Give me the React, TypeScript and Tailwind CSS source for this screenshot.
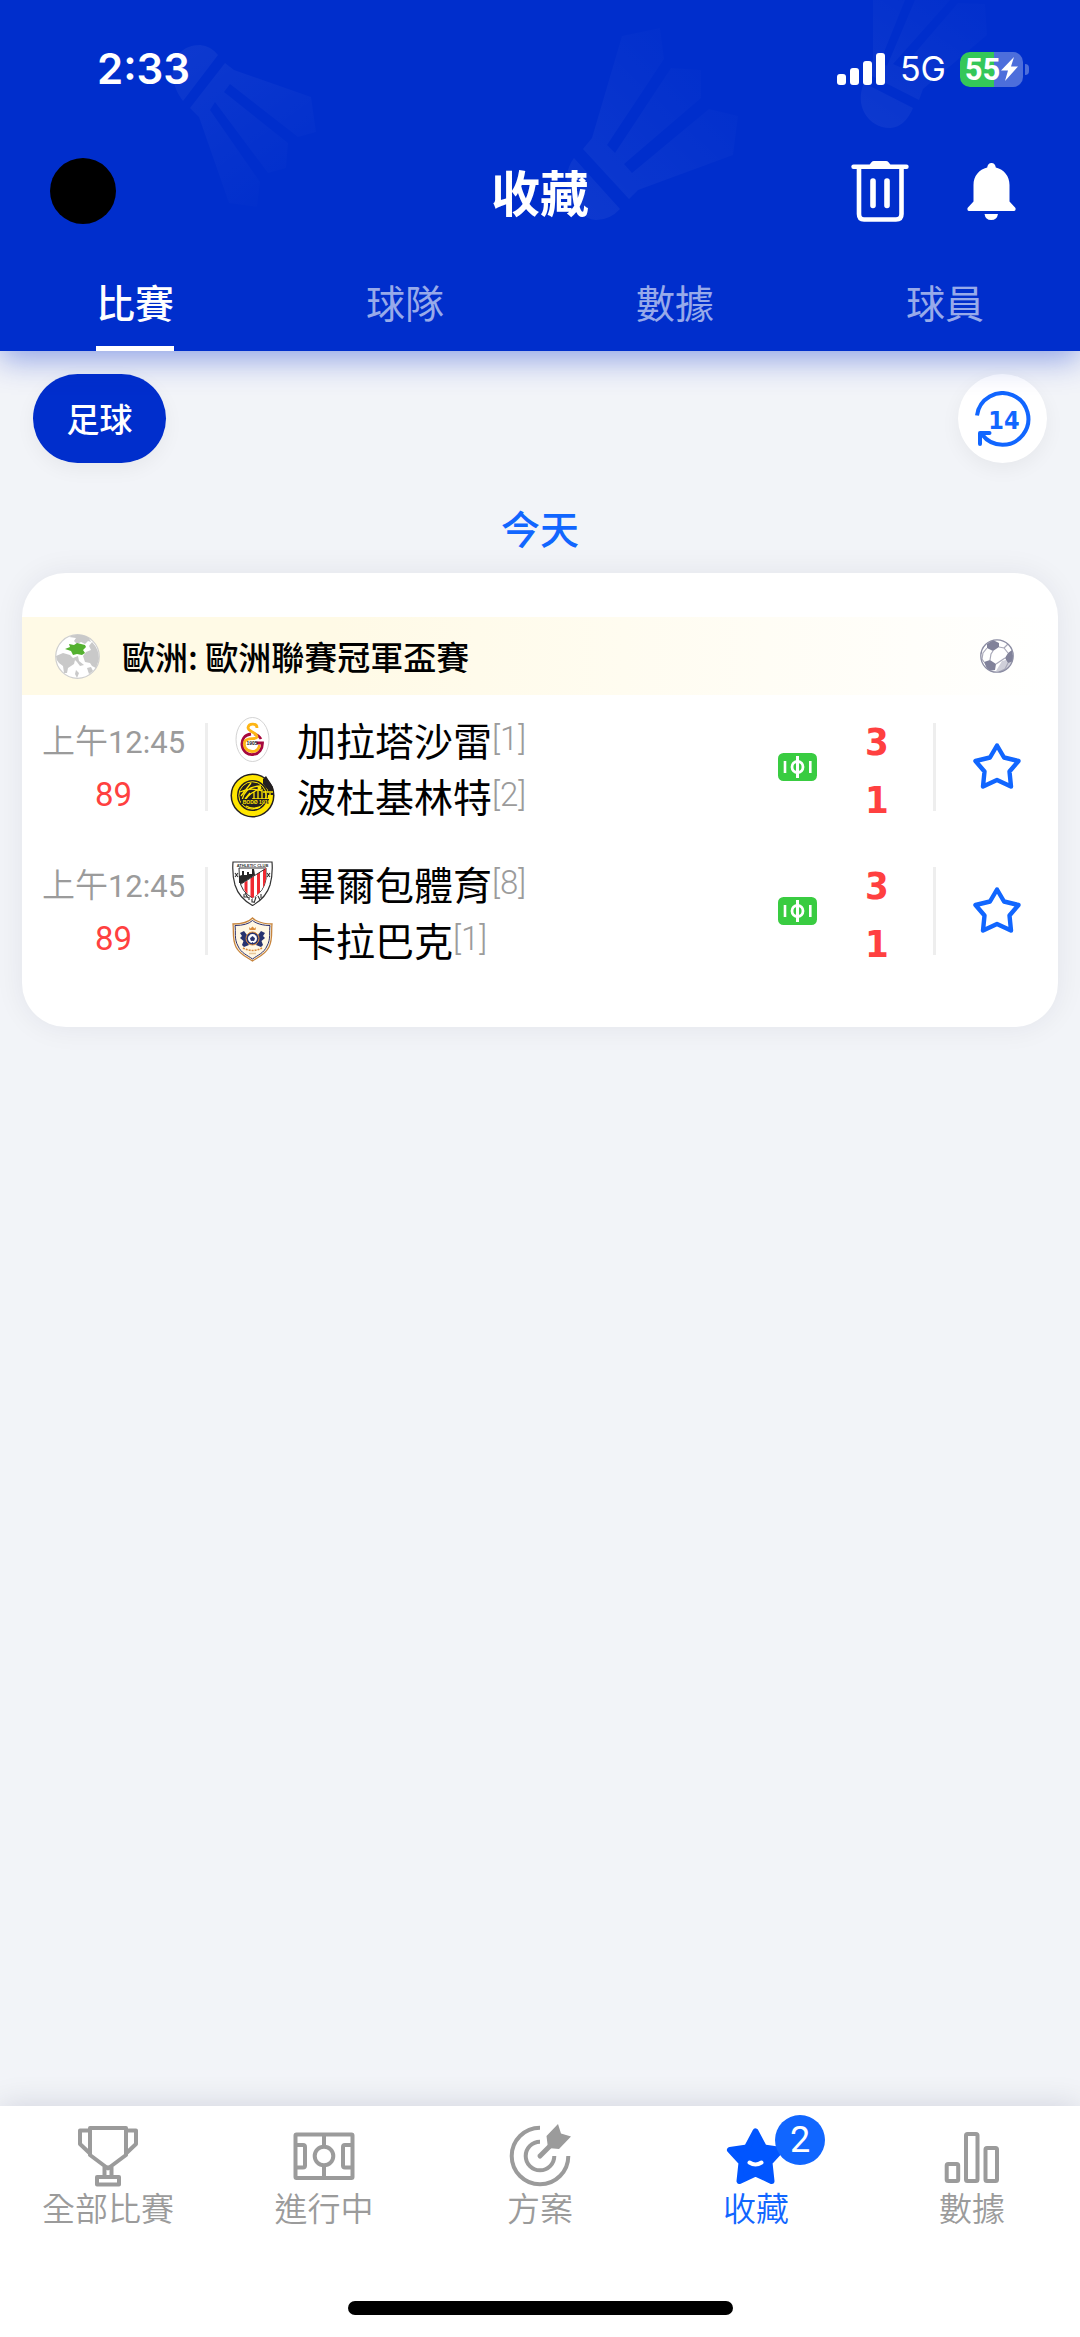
import type { ReactNode } from "react";

const CJK = "font-['Noto_Sans_CJK_TC','Noto_Sans',sans-serif]";

function Shuttlecocks() {
  return (
    <svg aria-hidden="true" viewBox="0 0 1080 230" preserveAspectRatio="xMidYMin slice" className="pointer-events-none absolute inset-x-0 top-0 w-full">
      <defs>
        <linearGradient id="s1" gradientUnits="userSpaceOnUse" x1="185" y1="60" x2="285" y2="200">
          <stop offset="0" stopColor="#fff" stopOpacity=".05" />
          <stop offset="1" stopColor="#fff" stopOpacity=".004" />
        </linearGradient>
        <linearGradient id="s2" gradientUnits="userSpaceOnUse" x1="580" y1="200" x2="715" y2="60">
          <stop offset="0" stopColor="#fff" stopOpacity=".05" />
          <stop offset="1" stopColor="#fff" stopOpacity=".006" />
        </linearGradient>
        <linearGradient id="s3" gradientUnits="userSpaceOnUse" x1="880" y1="125" x2="960" y2="0">
          <stop offset="0" stopColor="#fff" stopOpacity=".05" />
          <stop offset="1" stopColor="#fff" stopOpacity=".01" />
        </linearGradient>
      </defs>
      <path fill="url(#s1)" d="M183 101C164 76 172 45 200 45Q211 46 218 55ZM225 63 234 70 311 97 316 132 298 137 230 84 224 92 288 143 286 168 268 173 215 102 210 110 260 182 257 207 229 203 199 117 190 108Z" />
      <path fill="url(#s2)" d="M574 158C558 178 570 218 596 220Q610 220 620 209ZM583 149 592 138 622 36 660 28 664 59 607 145 615 153 671 68 701 70 701 98 624 164 632 173 709 109 738 116 733 155 638 190 629 199Z" />
      <path fill="url(#s3)" d="M864 83C854 105 868 128 890 128Q905 127 913 108ZM868 74 919 100 923 89 987 35 985 4 958 3 902 68 893 64 950 0 915 0 887 66 880 62 905 0 873 0 873 60Z" />
    </svg>
  );
}

function StatusBar() {
  return (
    <div className="relative flex h-[138px] items-center justify-between pr-[51px] pl-[97px] font-['Inter',sans-serif] text-white">
      <span className="text-[42px] leading-[50px] font-semibold">2:33</span>
      <div className="flex items-center">
        <svg width="48" height="32" viewBox="0 0 48 32" fill="#fff" aria-label="signal">
          <rect x="0" y="21" width="9" height="11" rx="3" />
          <rect x="13" y="15" width="9" height="17" rx="3" />
          <rect x="26" y="8" width="9" height="24" rx="3" />
          <rect x="39" y="0" width="9" height="32" rx="3" />
        </svg>
        <span className="ml-[15px] text-[34px] leading-[40px]">5G</span>
        <div className="ml-[14px] flex h-[35px] w-[63px] items-center justify-center gap-px rounded-[10px] bg-[linear-gradient(90deg,#34c759_0_54%,#4d6edb_54%)]">
          <span className="font-['Roboto',sans-serif] text-[31px] leading-[35px] font-bold">55</span>
          <svg width="17" height="24" viewBox="0 0 17 24" fill="#fff" aria-hidden="true">
            <path d="M13 0 0 13.500h7L4 24 17 9.500H10Z" />
          </svg>
        </div>
        <span className="ml-[2px] h-[11px] w-[4px] rounded-r-full bg-[#4d6edb]" />
      </div>
    </div>
  );
}

function TrashIcon() {
  return (
    <svg width="58" height="61" viewBox="0 0 58 61" fill="none" stroke="#fff" strokeLinecap="round" aria-hidden="true">
      <path d="M2.500 5.700H55.500" strokeWidth="4.400" />
      <path d="M18 5.500Q20 0 23 0H35Q38 0 40 5.500Z" fill="#fff" stroke="none" />
      <path d="M8 7V53Q8 58.500 13 58.500H45Q50.500 58.500 50.500 53V7" strokeWidth="4.600" />
      <path d="M22 20V44.500M36 20V44.500" strokeWidth="5.600" />
    </svg>
  );
}

function BellIcon() {
  return (
    <svg width="49" height="57" viewBox="0 0 49 57" fill="#fff" aria-hidden="true">
      <path d="M24.500 0C27 0 28.500 2 28.800 4.500 37 6.500 42.500 13 42.500 22V38.500L48.500 45Q49 48 47 48H2Q0 48 .5 45L6.500 38.500V22C6.500 13 12 6.500 20.200 4.500 20.500 2 22 0 24.500 0Z" />
      <path d="M17.500 51H31Q30 57 24.200 57T17.500 51Z" />
    </svg>
  );
}

const TABS = ["比賽", "球隊", "數據", "球員"];

function Header() {
  return (
    <header className="relative z-10 bg-[#002ecc] shadow-[0_8px_30px_rgba(0,46,204,0.42)]">
      <Shuttlecocks />
      <StatusBar />
      <div className="relative grid h-[106px] grid-cols-[1fr_auto_1fr] items-center px-[50px]">
        <button aria-label="帳戶" className="size-[66px] rounded-full bg-black" />
        <h1 className="text-[49px] leading-[60px] font-bold text-white">收藏</h1>
        <div className="flex items-center justify-end gap-[58px] pr-[14px]">
          <button aria-label="刪除"><TrashIcon /></button>
          <button aria-label="通知"><BellIcon /></button>
        </div>
      </div>
      <nav className="relative grid h-[107px] grid-cols-4">
        {TABS.map((t, i) => (
          <button key={t} className="flex flex-col items-center justify-end">
            <span className={i === 0 ? "text-[39px] leading-[58px] font-medium text-white" : "text-[39px] leading-[58px] text-white/60"}>{t}</span>
            <span className={i === 0 ? "mt-[16px] h-[5px] w-[78px] bg-white" : "mt-[16px] h-[5px] w-[78px]"} />
          </button>
        ))}
      </nav>
    </header>
  );
}

function HistoryIcon() {
  return (
    <svg width="56" height="56" viewBox="0 0 56 56" fill="none" stroke="#1166ff" strokeWidth="4" aria-hidden="true">
      <path d="M2 24.500A25.800 25.800 0 1 1 7 43.500" />
      <path d="M5 53V42H14.500" strokeLinecap="round" strokeLinejoin="round" />
      <text x="29" y="38" textAnchor="middle" fill="#1166ff" stroke="none" className="font-['DejaVu_Sans_Condensed','DejaVu_Sans',sans-serif] text-[25px] font-bold">14</text>
    </svg>
  );
}

function Globe() {
  return (
    <svg width="45" height="45" viewBox="0 0 45 45" aria-hidden="true">
      <circle cx="22.500" cy="22.500" r="21.800" fill="#fff" stroke="#cfcfcf" strokeWidth="1.200" />
      <path fill="#c9c9c9" d="M14 3C20 0 29 0 34 4L36 8 33 7 30 10 26 8 22 10 19 7 21 4ZM37 8Q44 15 44 25L41 34 37 32 35 29 30 28 28 22 31 18 36 16 34 12ZM1 22 8 19 15 21 20 26 19 30 13 34 12 39 9 39 8 32 4 29Q1 26 1 22ZM18 24 23 22 24 27 29 31 25 32 22 28ZM21 36 24 39 22 44 20 40ZM32 34 36 33 38 37 34 40Z" />
      <path fill="#54b130" d="M10 15 15 13 14 10 19 11 22 9 26 10 30 11 31 13 28 16 30 19 27 21 22 20 18 21 16 17Z" />
    </svg>
  );
}

function SoccerBall() {
  return (
    <svg width="34" height="34" viewBox="0 0 34 34" aria-hidden="true">
      <defs><clipPath id="ball"><circle cx="17" cy="17" r="16.200" /></clipPath></defs>
      <g clipPath="url(#ball)">
        <circle cx="17" cy="17" r="16.500" fill="#fff" />
        <path d="M22 22 30 20 33 26 24 33 16 32Z" fill="#cfcfd9" />
        <path d="M13 1 19 4 19 8 13 12 7 9 7 5ZM32 11 28 14 25 19 28 24 34 22ZM4 23 10 21 16 25 15 31 8 32ZM1 10 0 16 2 14ZM21 33 30 29 30 34Z" fill="#81829a" />
        <path d="M13 12 11 15 10 21M19 8 24 9 28 14M25 19 22 21 16 25M7 9 3 14 2 20 4 23M24 9 28 5M28 24 25 30 19 33" fill="none" stroke="#a9a9b9" strokeWidth="1.200" />
      </g>
      <circle cx="17" cy="17" r="16.200" fill="none" stroke="#8b8ca2" strokeWidth="1.300" />
    </svg>
  );
}

function Galatasaray() {
  return (
    <svg width="45" height="45" viewBox="0 0 45 45" aria-hidden="true">
      <ellipse cx="22.500" cy="22.500" rx="16.500" ry="22" fill="#fff" stroke="#c8c8c8" strokeWidth=".8" />
      <path d="M21 17C14 18 11.500 23 12 28 13 35 18 38 23 37.500 29 37 32.500 32 32.500 26H26.500" fill="none" stroke="#a6093d" strokeWidth="2.800" />
      <path d="M24 17Q29 18 31 22" fill="none" stroke="#a6093d" strokeWidth="2.600" />
      <path d="M27 11C27 6 19 6 18 10.500 18 15 27 15 27 20 26 23 18 20 15 24 13 29 16 34 22 34.500 27 34.500 29 31 29.500 28" fill="none" stroke="#fdb515" strokeWidth="2.800" />
      <text x="22" y="28" textAnchor="middle" fill="#222" className="font-['Liberation_Sans',sans-serif] text-[5px] font-bold">1905</text>
    </svg>
  );
}

function BodoGlimt() {
  return (
    <svg width="45" height="45" viewBox="0 0 45 45" aria-hidden="true">
      <circle cx="22.500" cy="22.500" r="22" fill="#231f20" />
      <circle cx="22.500" cy="22.500" r="18" fill="none" stroke="#ffe600" strokeWidth="5" />
      <path d="M33 6 36 3 43 14 44 22H36L38 17 33 11Z" fill="#231f20" />
      <circle cx="22.500" cy="22.500" r="13.700" fill="none" stroke="#ffe600" strokeWidth="1" />
      <path d="M12 27Q15 13 31 13M13 31Q18 20 30 16M11 23 21 10M10 19Q20 14 32 18M20 20 15 26M28 17V26M24 19V26M32 16V26M36 20V26M40 20V26M22 26H42M33 19H43" fill="none" stroke="#ffe600" strokeWidth="1.300" />
      <circle cx="29.500" cy="15" r="2" fill="#ffe600" />
      <path d="M16 33Q22 37 30 34" stroke="#ffe600" strokeWidth="1.500" fill="none" />
      <path d="M11 26H39V31H11Z" fill="#231f20" />
      <text x="26.500" y="30.500" textAnchor="middle" fill="#ffe600" className="font-['Liberation_Sans',sans-serif] text-[5px] font-bold">BODØ 1916</text>
    </svg>
  );
}

function Athletic() {
  return (
    <svg width="45" height="45" viewBox="0 0 45 45" aria-hidden="true">
      <defs><clipPath id="ath"><path d="M35.500 7V18Q34 30 23 37V27Q15 27 11 23Z" /></clipPath></defs>
      <path d="M3 1H42Q43 13 40 24 36 37 22.500 44.500 9 37 5 24 2 13 3 1Z" fill="#fff" stroke="#333" strokeWidth="1.200" />
      <path d="M9 7H36V18Q34 31 22.500 37 11 31 9.500 18Z" fill="#fff" stroke="#333" strokeWidth="1" />
      <path d="M9 15V22L14 22 25 14 24 8 22 8 22 13H19V11H17V14H14V10L12 10V14Z" fill="#262626" />
      <g clipPath="url(#ath)">
        <path d="M36 5 10 23 22 38 36 28Z" fill="#fff" />
      </g>
      <path d="M14.500 21.500 17.500 19.500V33Q15.500 31 14.500 29ZM20.500 17.500 24 15V36L22.500 37 20.500 35.500ZM27 13 30 11V31L27 34ZM33 9 36 7V18Q35.500 22 33 27Z" fill="#f02a32" />
      <path d="M35 8 11 23" stroke="#333" strokeWidth="1" />
      <text x="22.500" y="5.700" textAnchor="middle" fill="#333" className="font-['Liberation_Sans',sans-serif] text-[4px] font-bold">ATHLETIC CLUB</text>
      <path d="M5 12 8 16M8 12 5 16M37 12 40 16M40 12 37 16M14 33V36H17M19 36 19 39M22 38V41H24M28 35 30 39M31 33V37M15 32 18 37M26 36 24 42" stroke="#333" strokeWidth="1.100" fill="none" />
    </svg>
  );
}

function Qarabag() {
  return (
    <svg width="45" height="45" viewBox="0 0 45 45" aria-hidden="true">
      <path d="M22.500 1Q17 7 3 7C4 14 2 22 6 30 10 38 17 40 22.500 44 28 40 35 38 39 30 43 22 41 14 42 7 28 7 22.500 1 22.500 1Z" fill="#fff7e3" stroke="#c7853e" strokeWidth="1.300" />
      <path d="M22.500 3.500Q17 8.500 5 8.500C6 15 4 22 8 29 11 36 17 38 22.500 42 28 38 34 36 37 29 41 22 39 15 40 8.500 28 8.500 22.500 3.500 22.500 3.500Z" fill="none" stroke="#2b2f6c" strokeWidth="1" />
      <path d="M19 10 20.500 11.500 22.500 9.500 24.500 11.500 26 10 25.500 13H19.500Z" fill="#d98b3a" />
      <path d="M10 16 14 14 17 18 16 23 19 28 14 30 12 28 13.500 24 10 21 12 19ZM35 16 31 14 28 18 29 23 26 28 31 30 33 28 31.500 24 35 21 33 19Z" fill="#27336f" />
      <circle cx="22.500" cy="21.500" r="6.500" fill="#27336f" stroke="#d98b3a" strokeWidth="1" />
      <circle cx="22.500" cy="21.500" r="4.500" fill="#fff" />
      <path d="M22.500 19.500 24.500 21 24 23.500H21L20.500 21ZM18.500 18.500 20 17.500M26.500 18.500 25 17.500M22.500 26V25" fill="#27336f" stroke="#27336f" strokeWidth=".8" />
      <path d="M13 31Q22.500 36 32 31" fill="none" stroke="#d98b3a" strokeWidth="1.600" strokeDasharray="2 1" />
      <path d="M19 36.500H26" stroke="#e8c89a" strokeWidth="1.500" />
    </svg>
  );
}

function PitchBadge() {
  return (
    <svg width="39" height="28" viewBox="0 0 39 28" fill="none" stroke="#fff" aria-label="陣容">
      <rect width="39" height="28" rx="5.500" fill="#39cc41" stroke="none" />
      <path d="M19.500 3V25" strokeWidth="3" />
      <circle cx="19.500" cy="14" r="5.500" strokeWidth="2.800" />
      <path d="M7 8V20M32.300 8V20" strokeWidth="2.600" />
    </svg>
  );
}

function StarOutline() {
  return (
    <svg width="48" height="46" viewBox="0 0 48 46" fill="none" stroke="#1166ff" strokeWidth="4.400" strokeLinejoin="round" aria-hidden="true">
      <path d="M24 2.500 31 14.500 45.500 18 36.500 28.500 38 43.500 24 37 10 43.500 11.500 28.500 2.500 18 17 14.500Z" />
    </svg>
  );
}

type Team = { name: string; rank: string; score: number; crest: ReactNode };

const MATCHES: { id: number; time: string; minute: string; teams: Team[] }[] = [
  {
    id: 1,
    time: "12:45",
    minute: "89",
    teams: [
      { name: "加拉塔沙雷", rank: "[1]", score: 3, crest: <Galatasaray /> },
      { name: "波杜基林特", rank: "[2]", score: 1, crest: <BodoGlimt /> },
    ],
  },
  {
    id: 2,
    time: "12:45",
    minute: "89",
    teams: [
      { name: "畢爾包體育", rank: "[8]", score: 3, crest: <Athletic /> },
      { name: "卡拉巴克", rank: "[1]", score: 1, crest: <Qarabag /> },
    ],
  },
];

function MatchRow({ match }: { match: (typeof MATCHES)[number] }) {
  return (
    <li className="flex h-[144px] items-center">
      <div className="flex w-[183px] flex-col items-center text-[33px] leading-[52px]">
        <span className="font-[350] text-[#9b9b9b]">
          上午<span className="font-['Roboto',sans-serif] text-[31px] font-normal">{match.time}</span>
        </span>
        <span className="font-['Roboto',sans-serif] text-[#ff4040]">{match.minute}</span>
      </div>
      <div className="h-[88px] w-[3px] bg-[#eeeeee]" />
      <ul className="ml-[22px] flex-1">
        {match.teams.map((t) => (
          <li key={t.name} className="flex h-[56px] items-center">
            {t.crest}
            <span className="ml-[22px] text-[39px] leading-[56px] text-black">{t.name}</span>
            <span className="font-['Roboto',sans-serif] text-[33px] leading-[56px] font-light text-[#9b9b9b]">{t.rank}</span>
          </li>
        ))}
      </ul>
      <PitchBadge />
      <div className="ml-[40px] flex w-[40px] flex-col items-center pt-[8px] font-['DejaVu_Sans_Condensed','DejaVu_Sans',sans-serif] text-[38px] leading-[58px] font-bold text-[#ff4040]">
        {match.teams.map((t) => (
          <span key={t.name}>{t.score}</span>
        ))}
      </div>
      <div className="ml-[36px] h-[88px] w-[3px] bg-[#eeeeee]" />
      <button aria-label="收藏比賽" className="flex w-[122px] justify-center self-stretch pt-[48px]">
        <StarOutline />
      </button>
    </li>
  );
}

const NAV: { label: string; icon: ReactNode; active?: boolean; badge?: number }[] = [
  {
    label: "全部比賽",
    icon: (
      <>
        <path d="M12 4H48V31L30 44.500 12 31Z" />
        <path d="M12 6.500H2V20L12 29.500M48 6.500H58V20L48 29.500" />
        <path d="M26.500 43V53M33.500 43V53M26 43.500H34M19 53H41V60.500H19Z" />
      </>
    ),
  },
  {
    label: "進行中",
    icon: (
      <>
        <rect x="1.500" y="10.500" width="57" height="43.500" rx="1" />
        <circle cx="30" cy="32" r="9.300" />
        <path d="M30 11V22.500M30 41.500V53M2 21H9Q11 21 11 23V41.500Q11 43.500 9 43.500H2M58 21H51Q49 21 49 23V41.500Q49 43.500 51 43.500H58" />
      </>
    ),
  },
  {
    label: "方案",
    icon: (
      <>
        <path d="M30 3.700A28.300 28.300 0 1 0 58.300 32" />
        <path d="M30 17.700A14.300 14.300 0 1 0 44.300 32" />
        <path d="M30 32 41 21" strokeWidth="5" strokeLinecap="round" />
        <path d="M48 0 51 9.500 61 12.500 49 25 38 24 36.500 12Z" fill="#9b9b9b" stroke="none" />
      </>
    ),
  },
  {
    label: "收藏",
    active: true,
    badge: 2,
    icon: (
      <>
        <path d="M29.500 7.500 38 23.500 55 26 43.500 38.500 45.500 57 29.500 49.500 13.500 57 15.500 38.500 4 26 21 23.500Z" fill="#0055ff" stroke="#0055ff" strokeWidth="6" />
        <path d="M23.500 38.500Q29.500 42.500 35.500 38.500" stroke="#fff" strokeWidth="4" strokeLinecap="round" />
      </>
    ),
  },
  {
    label: "數據",
    icon: (
      <>
        <rect x="4.700" y="40" width="11.500" height="17" rx="1.500" />
        <rect x="24" y="10" width="11.500" height="47" rx="1.500" />
        <rect x="43.500" y="24" width="11.500" height="33" rx="1.500" />
      </>
    ),
  },
];

function BottomNav() {
  return (
    <nav className="relative bg-white pt-[18px] pb-[22px] shadow-[0_0_30px_rgba(0,10,60,0.14)]">
      <div className="grid grid-cols-5">
        {NAV.map((n) => (
          <a key={n.label} href="#" className="flex flex-col items-center">
            <span className="relative">
              <svg width="60" height="64" viewBox="0 0 60 64" fill="none" stroke="#9b9b9b" strokeWidth="4" strokeLinejoin="round" className="overflow-visible" aria-hidden="true">
                {n.icon}
              </svg>
              {n.badge && (
                <span className="absolute -top-[9px] left-[49px] flex size-[50px] items-center justify-center rounded-full bg-[#1166ff] font-['Roboto',sans-serif] text-[36px] leading-[50px] text-white">
                  {n.badge}
                </span>
              )}
            </span>
            <span className={n.active ? "text-[33px] leading-[38px] font-[350] text-[#1166ff]" : "text-[33px] leading-[38px] font-[350] text-[#9b9b9b]"}>{n.label}</span>
          </a>
        ))}
      </div>
      <div className="mx-auto mt-[75px] h-[14px] w-[385px] rounded-full bg-black" />
    </nav>
  );
}

export default function App() {
  return (
    <div lang="zh-Hant" className={`flex min-h-screen flex-col bg-[#f2f4f8] ${CJK}`}>
      <Header />
      <main className="flex-1">
        <div className="flex items-center justify-between px-[33px] pt-[23px]">
          <button className="h-[89px] w-[133px] rounded-full bg-[#002ecc] pb-[2px] text-[33px] leading-[48px] font-medium text-white shadow-[0_6px_20px_rgba(0,0,0,0.05)]">足球</button>
          <button aria-label="最近14天" className="flex size-[89px] items-center justify-center rounded-full bg-white shadow-[0_6px_20px_rgba(0,0,0,0.05)]">
            <HistoryIcon />
          </button>
        </div>
        <h2 className="mt-[34px] mb-[16px] text-center text-[39px] leading-[60px] font-medium text-[#1166ff]">今天</h2>
        <section className="mx-[22px] rounded-[44px] bg-white py-[44px] shadow-[0_0_30px_rgba(0,10,60,0.07)]">
          <div className="flex h-[78px] items-center bg-[linear-gradient(90deg,#fffae6_0%,#fffae6_30%,#ffffff_100%)] pr-[44px] pl-[33px]">
            <Globe />
            <h3 className="ml-[22px] flex-1 text-[33px] leading-[48px] font-medium text-black">歐洲: 歐洲聯賽冠軍盃賽</h3>
            <SoccerBall />
          </div>
          <ul>
            {MATCHES.map((m) => (
              <MatchRow key={m.id} match={m} />
            ))}
          </ul>
        </section>
      </main>
      <BottomNav />
    </div>
  );
}
